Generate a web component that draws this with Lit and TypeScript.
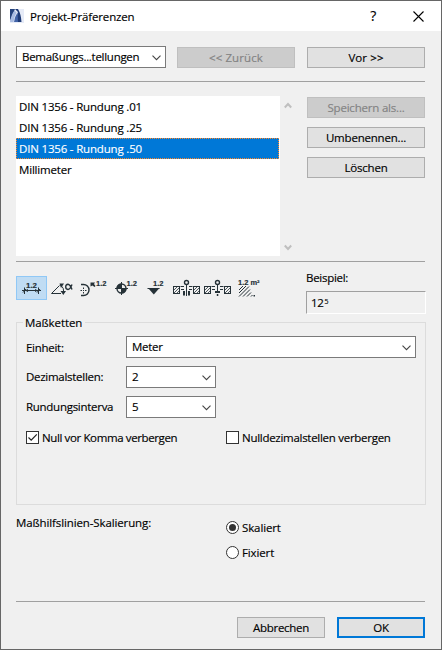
import { LitElement, html, css, svg, TemplateResult } from "lit";
import { customElement, property, state } from "lit/decorators.js";
import { classMap } from "lit/directives/class-map.js";

@customElement("push-button")
class PushButton extends LitElement {
  @property({ type: Boolean, reflect: true }) disabled = false;
  @property({ type: Boolean, reflect: true }) primary = false;
  static styles = css`
    :host { display: flex; height: 21px; box-sizing: border-box; border: 1px solid #adadad;
      background: #e1e1e1; color: #000; align-items: center; justify-content: center;
      white-space: nowrap; padding-top: 1px; }
    :host([disabled]) { background: #ccc; border-color: #bfbfbf; color: #838383; }
    :host([primary]) { border: 2px solid #0078d7; }
  `;
  render() { return html`<slot></slot>`; }
}

@customElement("combo-box")
class ComboBox extends LitElement {
  static styles = css`
    :host { display: flex; height: 22px; box-sizing: border-box; border: 1px solid #7a7a7a;
      background: #fff; align-items: center; justify-content: space-between;
      padding: 0 4px 0 5px; white-space: nowrap; }
    svg { width: 9px; height: 6px; margin-top: 2px; }
  `;
  render() {
    return html`<span><slot></slot></span>
      <svg viewBox="0 0 9 6"><path d="M.5.7l4 4 4-4" fill="none" stroke="#444" stroke-width="1.1"/></svg>`;
  }
}

const caption = (x: number, y: number, t: string, w: number) =>
  svg`<text x=${x} y=${y} textLength=${w} lengthAdjust="spacingAndGlyphs">${t}</text>`;

const hatchBox = (x: number) => svg`
  <rect x=${x + 0.5} y="10.5" width="6" height="7" class="l"/>
  <path d="M${x + 1} 14l3-3M${x + 1} 17l5.500-5.500M${x + 4} 17l2.500-2.500" class="l t"/>`;

const icons: TemplateResult[] = [
  svg`${caption(10, 12, "1.2", 11)}
    <path d="M6 14.5h19" class="l"/><path d="M8.500 11.500v6.500M22.500 11.500v6.500M7 16.500l3-3.500M21 16.500l3-3.500" class="l"/>
    <path d="M9 14.5l3-1.500v3zM22 14.5l-3-1.500v3z"/>`,
  svg`<path d="M12.5 9.5L4.5 17.5h9.5M14 9.5q3 2 2.8 7" class="l"/>
    <path d="M12.500 7.500h4.500l-3 4.500zM13.500 15h5.500l-2.700 4z"/>
    <path d="M25 8.500q-2 5-4 5-2.300-.2-2.300-2.700t2.300-2.600q2 .2 4 5.300" class="l b"/>`,
  svg`<path d="M3 8.500h2.500a5.500 5.500 0 0 1 0 11h-2.500" class="l b"/>
    <path d="M5.500 11.500v1.500M5.500 16v1.500M2.500 14.500h1.500M7 14.500h1.500M5 14.500h1" class="l"/>
    <path d="M12.500 6.500h4.500l-1 1.500 1.500 2-1 1-2-1.500-2 1z"/>${caption(18, 9.500, "1.2", 10.500)}`,
  svg`<circle cx="12.500" cy="12.500" r="4.500" class="l b"/>
    <path d="M6 12.500h13M12.500 6v13" class="l"/>
    <path d="M12.500 12.500h-5a5 5 0 0 1 5-5zM12.500 12.500h5a5 5 0 0 1-5 5z"/>
    ${caption(17.500, 9.500, "1.2", 10.500)}`,
  svg`<path d="M8 12h11.500l-5.700 6.500z"/><path d="M7.500 12.500h12" class="l"/>${caption(13, 9.500, "1.2", 10.500)}`,
  svg`${hatchBox(2)}${hatchBox(22)}
    <circle cx="15.500" cy="6.500" r="2" class="l b"/>
    <path d="M15.500 8.500v11.500M9.500 10.500h3.500M10 13.500h3M18 10.500h3.500M18 13.500h3" class="l"/>
    <path d="M12 15h2v4.500h-2zM17 15h2v4.500h-2z"/>`,
  svg`${hatchBox(2)}${hatchBox(22)}
    <circle cx="15.500" cy="6.500" r="2" class="l b"/>
    <path d="M15.500 8.500v7M9.500 10.500h3.500M10 13.500h3M18 10.500h3.500M18 13.500h3" class="l"/>
    <path d="M13 15h5v2h-5zM14.800 18h1.500v2h-1.500z"/>`,
  svg`${caption(5, 9, "1.2 m²", 21.500)}
    <path d="M6 14l4-4M6 17l7-7M6 20.500l10-10M10 20.500l7-7M14 20.500l4-4M18 20.500l1.500-1.500" class="l"/>
    <path d="M20.500 19h1.500v1.500h-1.500z"/>`,
];

@customElement("app-root")
class AppRoot extends LitElement {
  @state() selected = 2;
  @state() tool = 0;

  static styles = css`
    :host { display: block; width: 442px; height: 650px; box-sizing: border-box;
      border: 1px solid #666; background: #f0f0f0; color: #000; -webkit-text-stroke: .15px;
      font: 11.500px/16px "Open Sans", "Noto Sans", sans-serif; letter-spacing: -.28px; overflow: hidden; }
    .title { height: 30px; background: #fff; display: flex; align-items: center; padding: 0 17px 0 9px; }
    .logo { width: 14px; height: 14px; }
    .title h1 { font: inherit; margin: 1px 0 0 6px; flex: 1; letter-spacing: -.14px; }
    .help { font-size: 14px; margin-right: 37px; }
    .close { width: 11px; height: 11px; }
    .body { padding: 15px 16px 0 15px; display: flex; flex-direction: column; }
    .nav { display: grid; grid-template-columns: 150px 118px 118px; column-gap: 11px; align-items: end; height: 22px; }
    .nav push-button { letter-spacing: .1px; }
    .nav push-button:last-child { margin: 0 -1px 0 1px; }
    .rule { height: 1px; background: #a0a0a0; }
    .nav + .rule { margin-top: 13px; }
    .presets { display: flex; margin-top: 14px; height: 160px; }
    .list { width: 264px; background: #fff; }
    .item { height: 21px; box-sizing: border-box; display: flex; align-items: center; padding: 1px 0 0 3px; margin-right: 1px; letter-spacing: -.18px; }
    .item.on { background: #0078d7; color: #fff; outline: 1px dotted #ff8728; outline-offset: -1px; }
    .scroll { width: 15px; display: flex; flex-direction: column; justify-content: space-between; align-items: center; padding: 6px 0 5px; box-sizing: border-box; }
    .scroll svg { width: 8px; height: 7px; }
    .actions { width: 118px; margin: 1px 0 0 12px; display: flex; flex-direction: column; gap: 9px; letter-spacing: -.2px; }
    .presets + .rule { margin-top: 5px; }
    .toolrow { display: flex; justify-content: space-between; height: 52px; margin: 8px -1px 0 0; }
    .tools { display: flex; padding-top: 6px; }
    .tool { width: 31px; height: 24px; }
    .tool.on { background: #c0dcf3; outline: 1px solid #90c8f6; outline-offset: -1px; }
    .tool svg { display: block; fill: #263238; }
    .tool .l { fill: none; stroke: #263238; stroke-width: 1; }
    .tool .b { stroke-width: 1.400; }
    .tool .t { stroke-width: .8; }
    .tool text { font: bold 7px "Liberation Sans", sans-serif; letter-spacing: 0; stroke: #263238; stroke-width: .15px; }
    .sample { width: 120px; }
    .field { height: 23px; box-sizing: border-box; border: 1px solid; border-color: #a0a0a0 #fff #fff #a0a0a0;
      margin-top: 5px; padding: 3px 0 0 4px; }
    .sup { font-size: 7px; position: relative; top: -3px; margin-left: 1px; }
    .group { border: 1px solid #dcdcdc; height: 183px; box-sizing: border-box; margin: 0 -1px 0 0;
      padding: 0 9px; display: grid; grid-template-columns: 100px 1fr; grid-template-rows: 13px 30px 30px 35px 13px;
      align-content: start; }
    .legend { grid-column: 1 / -1; justify-self: start; margin: -8px 0 0 -3px; padding: 0 3px 0 2px; background: #f0f0f0; height: 16px; letter-spacing: -.1px; }
    .lab { width: 90px; white-space: nowrap; padding-top: 3px; }
    .legend + .lab { padding-top: 4px; }
    .short { width: 90px; }
    .checks { grid-column: 1 / -1; display: grid; grid-template-columns: 200px 1fr; }
    .checks .opt:first-child { letter-spacing: -.38px; }
    .opt { display: flex; align-items: center; height: 13px; white-space: nowrap; }
    .opt span { margin: 1px 0 0 3px; }
    .box { width: 13px; height: 13px; box-sizing: border-box; border: 1px solid #333; background: #fff; }
    .box svg { display: block; }
    .radio { width: 13px; height: 13px; box-sizing: border-box; border: 1px solid #333; border-radius: 50%; background: #fff; padding: 2px; }
    .radio.on::before { content: ""; display: block; width: 7px; height: 7px; border-radius: 50%; background: #333; }
    .scale { display: grid; grid-template-columns: 210px 1fr; margin-top: 10px; height: 86px; letter-spacing: -.12px; }
    .radios { display: flex; flex-direction: column; gap: 12px; padding-top: 6px; }
    .foot { display: flex; justify-content: flex-end; gap: 12px; margin-top: 15px; }
    .foot push-button { width: 88px; }
  `;

  render() {
    const rows = ["DIN 1356 - Rundung .01", "DIN 1356 - Rundung .25", "DIN 1356 - Rundung .50", "Millimeter"];
    return html`
      <div class="title">
        <svg class="logo" viewBox="0 0 14 14">
          <rect width="14" height="14" fill="#e6ebf7"/>
          <path d="M0 0h5L0 12z" fill="#24427c"/>
          <path d="M0 13Q1.500 5 4.500 1.500l2 2Q4 8 3.500 13z" fill="#a9bce2"/>
          <path d="M5 0h3q3 5 3.500 13H5L8 3z" fill="#1e3a75"/>
          <path d="M7.500 3.500Q5 7 4 13h4z" fill="#4364a8"/>
        </svg>
        <h1>Projekt-Präferenzen</h1>
        <span class="help">?</span>
        <svg class="close" viewBox="0 0 11 11"><path d="M.5.5l10 10M10.500.5l-10 10" stroke="#000" stroke-width="1.100"/></svg>
      </div>
      <div class="body">
        <div class="nav">
          <combo-box>Bemaßungs...tellungen</combo-box>
          <push-button disabled>&lt;&lt; Zurück</push-button>
          <push-button>Vor &gt;&gt;</push-button>
        </div>
        <div class="rule"></div>
        <div class="presets">
          <div class="list">
            ${rows.map((r, i) => html`<div class=${classMap({ item: true, on: i === this.selected })}
              @click=${() => (this.selected = i)}>${r}</div>`)}
          </div>
          <div class="scroll">
            <svg viewBox="0 0 8 7"><path d="M.8 5.500L4 2l3.200 3.500" fill="none" stroke="#bfbfbf" stroke-width="2"/></svg>
            <svg viewBox="0 0 8 7"><path d="M.8 1.500L4 5l3.200-3.500" fill="none" stroke="#bfbfbf" stroke-width="2"/></svg>
          </div>
          <div class="actions">
            <push-button disabled>Speichern als...</push-button>
            <push-button>Umbenennen...</push-button>
            <push-button>Löschen</push-button>
          </div>
        </div>
        <div class="rule"></div>
        <div class="toolrow">
          <div class="tools">
            ${icons.map((ic, i) => html`<div class=${classMap({ tool: true, on: i === this.tool })}
              @click=${() => (this.tool = i)}><svg width="31" height="24" viewBox="0 0 31 24">${ic}</svg></div>`)}
          </div>
          <div class="sample">
            <div>Beispiel:</div>
            <div class="field">12<span class="sup">5</span></div>
          </div>
        </div>
        <div class="group">
          <div class="legend">Maßketten</div>
          <div class="lab">Einheit:</div><combo-box>Meter</combo-box>
          <div class="lab">Dezimalstellen:</div><combo-box class="short">2</combo-box>
          <div class="lab">Rundungsinterva</div><combo-box class="short">5</combo-box>
          <div class="checks">
            <div class="opt"><div class="box"><svg width="11" height="11" viewBox="0 0 11 11"><path d="M1.500 5.500l2.700 2.700L9.800 2.300" fill="none" stroke="#222" stroke-width="1.200"/></svg></div><span>Null vor Komma verbergen</span></div>
            <div class="opt"><div class="box"></div><span>Nulldezimalstellen verbergen</span></div>
          </div>
        </div>
        <div class="scale">
          <div>Maßhilfslinien-Skalierung:</div>
          <div class="radios">
            <div class="opt"><div class="radio on"></div><span>Skaliert</span></div>
            <div class="opt"><div class="radio"></div><span>Fixiert</span></div>
          </div>
        </div>
        <div class="rule"></div>
        <div class="foot">
          <push-button>Abbrechen</push-button>
          <push-button primary>OK</push-button>
        </div>
      </div>`;
  }
}
